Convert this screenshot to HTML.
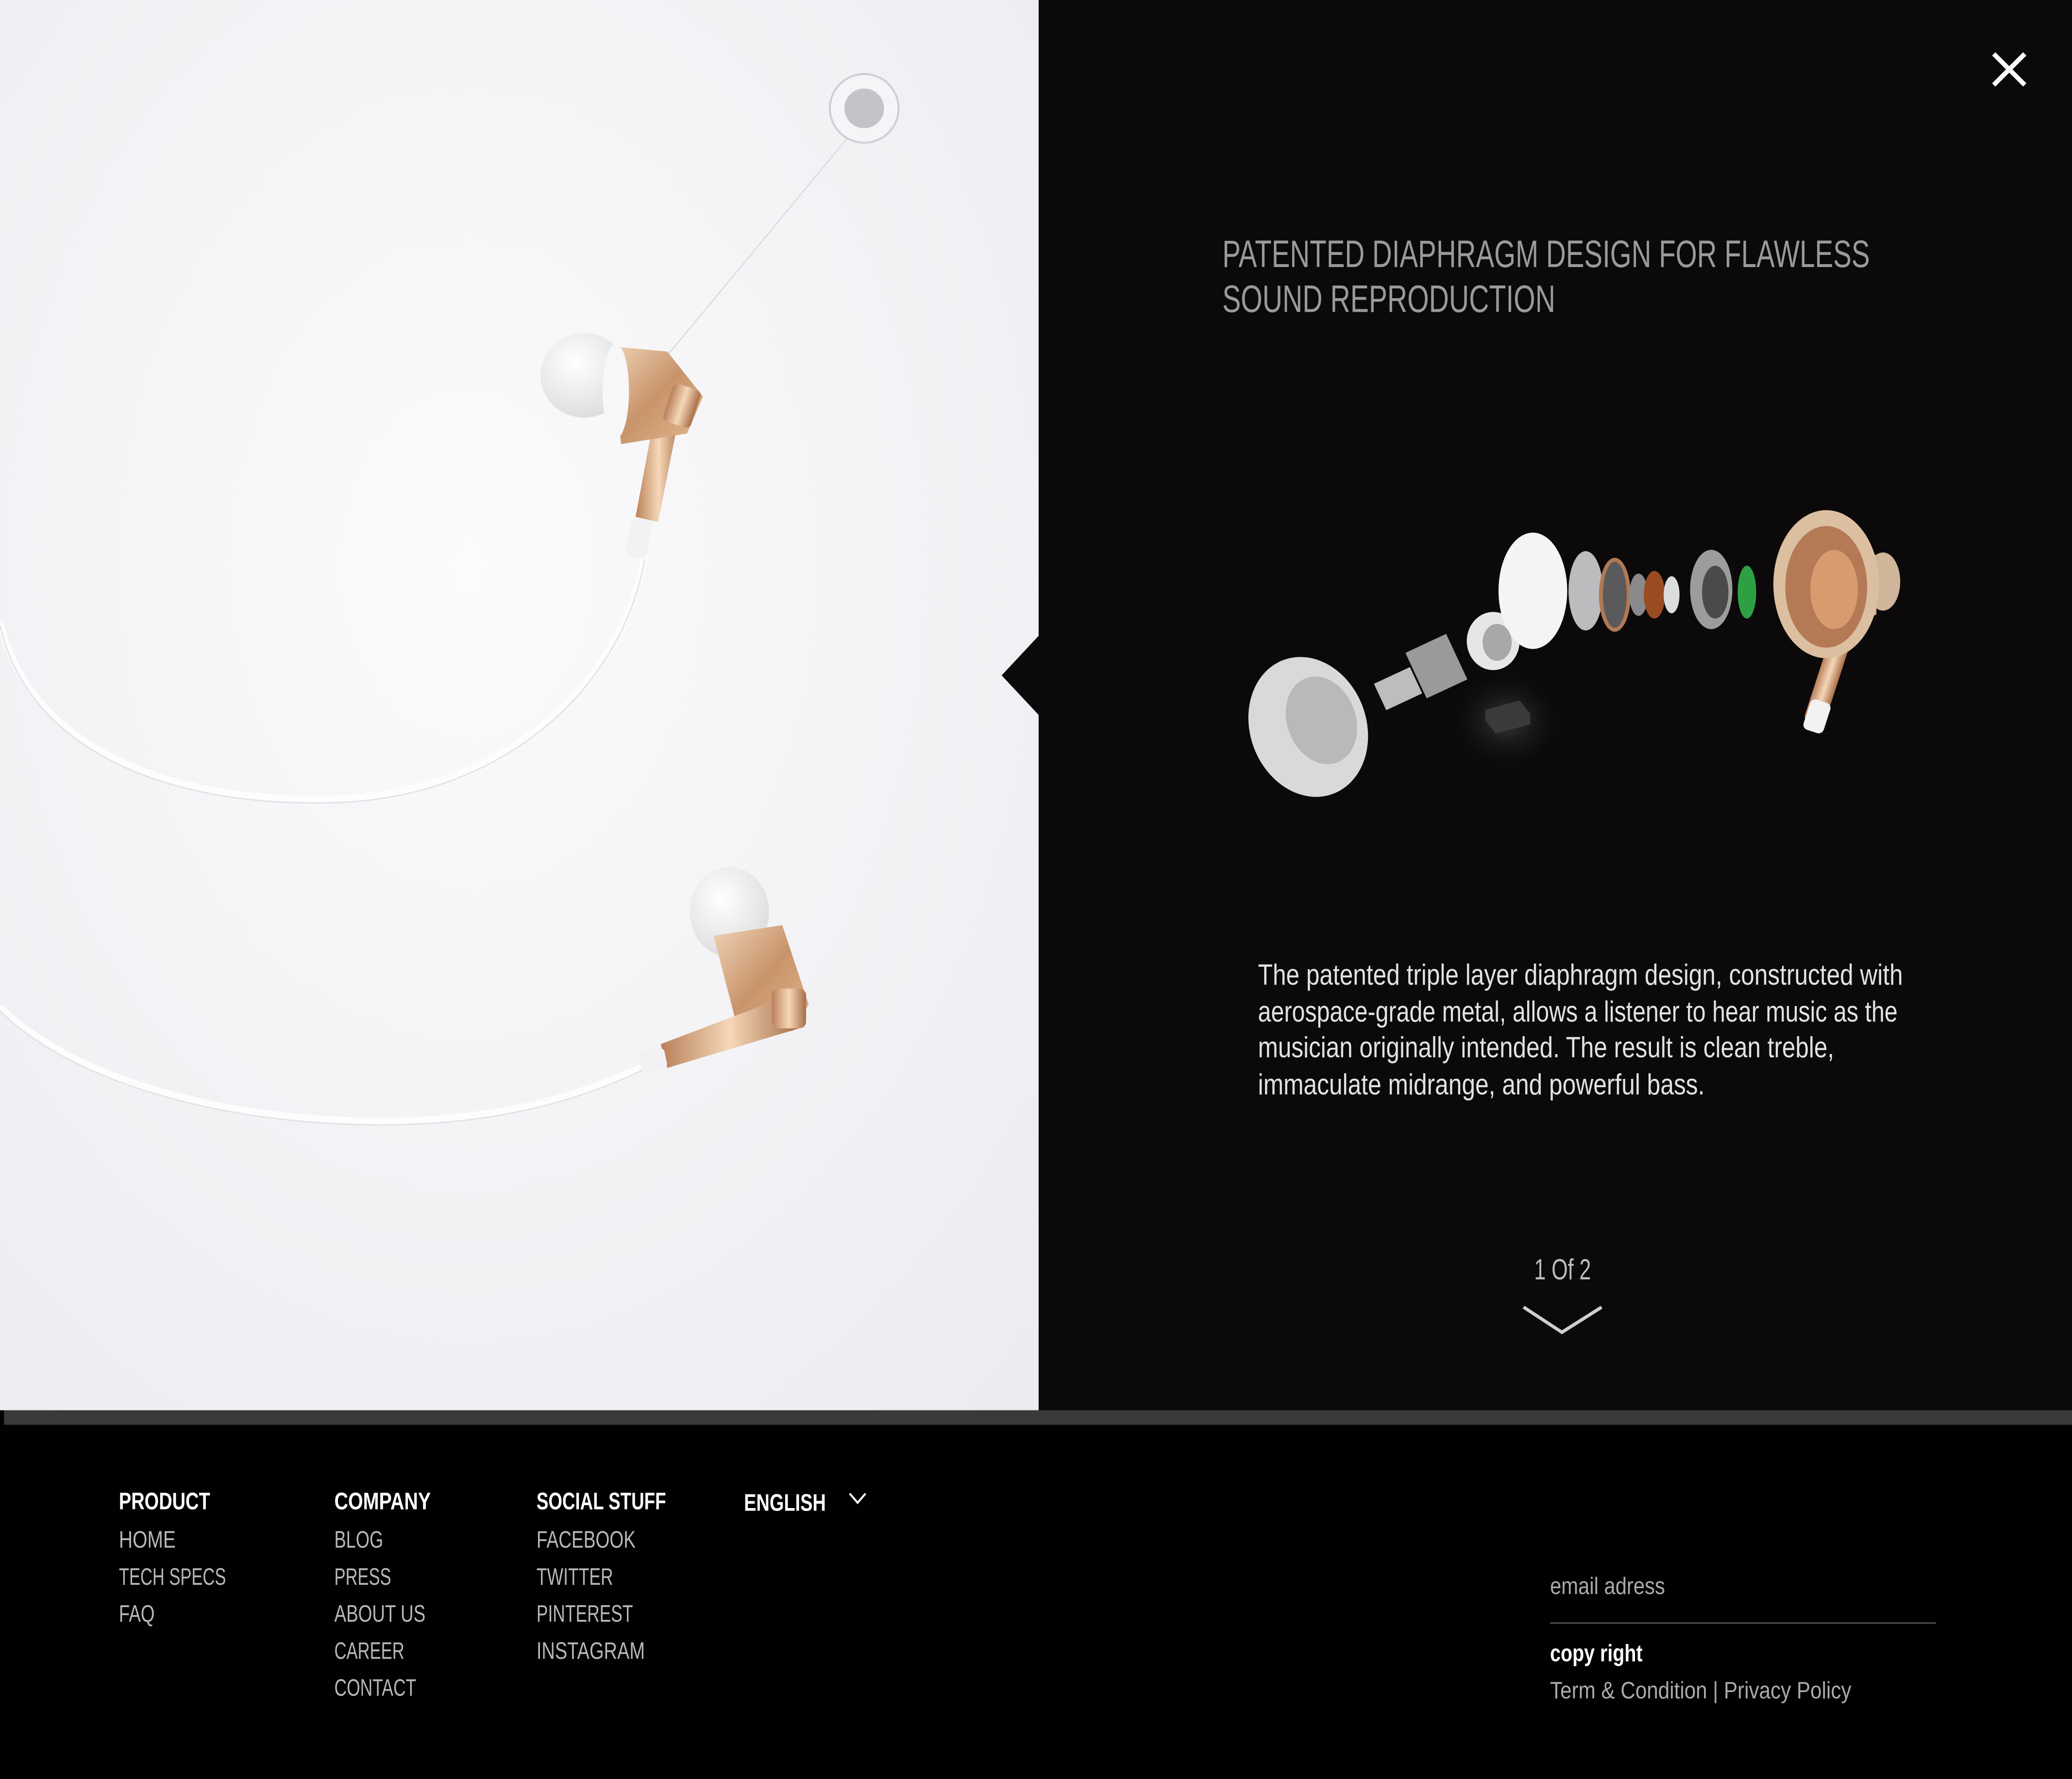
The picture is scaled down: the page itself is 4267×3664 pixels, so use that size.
<!DOCTYPE html>
<html><head><meta charset="utf-8"><style>
html,body{margin:0;padding:0;background:#000;overflow:hidden}
svg{display:block}
text{font-family:"Liberation Sans",sans-serif}
</style></head><body>
<svg width="4267" height="3664" viewBox="0 0 1568 1346" preserveAspectRatio="none" xmlns="http://www.w3.org/2000/svg">
<defs>
<radialGradient id="bgw" cx="0.45" cy="0.4" r="0.8"><stop offset="0" stop-color="#fbfbfc"/><stop offset="1" stop-color="#ecebf0"/></radialGradient>
<linearGradient id="gold" x1="0" y1="0" x2="1" y2="1"><stop offset="0" stop-color="#f0d3b6"/><stop offset="0.5" stop-color="#c8946b"/><stop offset="1" stop-color="#e2b88f"/></linearGradient>
<linearGradient id="gold2" x1="0" y1="0" x2="1" y2="0"><stop offset="0" stop-color="#b9805a"/><stop offset="0.5" stop-color="#f5d7b8"/><stop offset="1" stop-color="#a86e48"/></linearGradient>
<radialGradient id="dome" cx="0.4" cy="0.35" r="0.7"><stop offset="0" stop-color="#ffffff"/><stop offset="1" stop-color="#dcdcdf"/></radialGradient>
<radialGradient id="glow" cx="0.5" cy="0.5" r="0.5"><stop offset="0" stop-color="#3a3a3a"/><stop offset="1" stop-color="#0c090a" stop-opacity="0"/></radialGradient>
</defs>
<rect x="0" y="0" width="1568" height="1346" fill="#000"/>
<rect x="0" y="0" width="786" height="1067" fill="url(#bgw)"/>
<rect x="786" y="0" width="782" height="1067" fill="#0c090a"/>
<polygon points="787,480 758,511 787,542" fill="#0c090a"/>
<rect x="3" y="1067" width="1565" height="11" fill="#3a3839"/>

<!-- left photo approximation -->
<line x1="645" y1="100" x2="500" y2="275" stroke="#d8d8dc" stroke-width="0.8"/>
<circle cx="654" cy="82" r="26" fill="#f5f5f7" stroke="#cfcfd3" stroke-width="1.5"/>
<circle cx="654" cy="82" r="15" fill="#c4c4c8"/>
<path d="M0,470 C20,560 120,610 260,604 C380,598 470,520 488,420" fill="none" stroke="#fdfdfe" stroke-width="5"/>
<path d="M0,470 C20,560 120,610 260,604 C380,598 470,520 488,420" fill="none" stroke="#e2e2e6" stroke-width="1" transform="translate(0,3)"/>
<path d="M0,762 C60,820 180,850 300,848 C400,846 460,820 500,800" fill="none" stroke="#fdfdfe" stroke-width="5"/>
<path d="M0,762 C60,820 180,850 300,848 C400,846 460,820 500,800" fill="none" stroke="#e2e2e6" stroke-width="1" transform="translate(0,3)"/>
<!-- earbud 1 -->
<rect x="476" y="392" width="16" height="30" rx="4" fill="#f2f2f4" transform="rotate(12 484 405)"/>
<polygon points="498,300 516,304 498,395 481,391" fill="url(#gold2)"/>
<polygon points="462,262 505,266 532,300 520,328 470,336" fill="url(#gold)"/>
<rect x="505" y="292" width="22" height="30" rx="4" fill="url(#gold2)" transform="rotate(18 516 307)"/>
<ellipse cx="442" cy="284" rx="33" ry="32" fill="url(#dome)"/>
<ellipse cx="466" cy="296" rx="10" ry="36" fill="#f7f7f8"/>
<!-- earbud 2 -->
<ellipse cx="552" cy="690" rx="30" ry="34" fill="url(#dome)"/>
<polygon points="540,708 592,700 612,760 600,780 560,785" fill="url(#gold)"/>
<polygon points="600,752 605,778 505,808 500,790" fill="url(#gold2)"/>
<rect x="584" y="748" width="26" height="30" rx="5" fill="url(#gold2)"/>
<rect x="484" y="794" width="20" height="16" rx="4" fill="#f2f2f4" transform="rotate(-12 494 802)"/>

<!-- exploded view approximation -->
<ellipse cx="1140" cy="545" rx="45" ry="40" fill="url(#glow)"/>
<polygon points="1124,537 1150,530 1158,540 1158,548 1132,555 1124,545" fill="#3a3a3c"/>
<ellipse cx="990" cy="550" rx="44" ry="54" fill="#d9d9da" transform="rotate(-20 990 550)"/>
<ellipse cx="1000" cy="545" rx="26" ry="34" fill="#b9b9bb" transform="rotate(-20 1000 545)"/>
<rect x="1043" y="510" width="30" height="22" fill="#bdbdbf" transform="rotate(-25 1058 521)"/>
<rect x="1070" y="485" width="34" height="38" fill="#9a9a9c" transform="rotate(-25 1087 504)"/>
<ellipse cx="1130" cy="485" rx="20" ry="22" fill="#e6e6e8"/>
<ellipse cx="1160" cy="447" rx="26" ry="44" fill="#f4f4f5"/>
<ellipse cx="1133" cy="486" rx="11" ry="14" fill="#a8a8aa"/>
<ellipse cx="1200" cy="447" rx="13" ry="30" fill="#bcbcbe"/>
<ellipse cx="1222" cy="450" rx="12" ry="28" fill="#b07a55"/>
<ellipse cx="1222" cy="450" rx="9" ry="25" fill="#5a5a5c"/>
<ellipse cx="1240" cy="450" rx="7" ry="16" fill="#8a8a8c"/>
<ellipse cx="1252" cy="450" rx="8" ry="18" fill="#9a4b22"/>
<ellipse cx="1265" cy="450" rx="6" ry="14" fill="#dcdcdc"/>
<ellipse cx="1295" cy="446" rx="16" ry="30" fill="#9c9c9e"/>
<ellipse cx="1298" cy="448" rx="10" ry="20" fill="#4a4a4c"/>
<ellipse cx="1322" cy="448" rx="7" ry="20" fill="#2ea043"/>
<rect x="1378" y="460" width="16" height="90" rx="5" fill="url(#gold2)" transform="rotate(18 1386 505)"/>
<rect x="1367" y="530" width="16" height="24" rx="4" fill="#f2f2f2" transform="rotate(18 1375 542)"/>
<ellipse cx="1425" cy="440" rx="13" ry="22" fill="#cfb69a"/>
<polygon points="1380,405 1420,420 1420,465 1380,480" fill="#c9ae8f"/>
<ellipse cx="1382" cy="442" rx="40" ry="56" fill="#dcbfa0"/>
<ellipse cx="1382" cy="444" rx="31" ry="46" fill="#b47a56"/>
<ellipse cx="1388" cy="446" rx="18" ry="30" fill="#d89a6f"/>

<!-- close -->
<path d="M1510,42 L1531,63 M1531,42 L1510,63" stroke="#fff" stroke-width="3.5" stroke-linecap="square"/>

<!-- title -->
<text x="925" y="202" font-size="29" fill="#9a9a9a" textLength="490" lengthAdjust="spacingAndGlyphs">PATENTED DIAPHRAGM DESIGN FOR FLAWLESS</text>
<text x="925" y="236" font-size="29" fill="#9a9a9a" textLength="252" lengthAdjust="spacingAndGlyphs">SOUND REPRODUCTION</text>

<!-- body -->
<g font-size="22" fill="#e2e2e2">
<text x="952" y="745" textLength="488" lengthAdjust="spacingAndGlyphs">The patented triple layer diaphragm design, constructed with</text>
<text x="952" y="773" textLength="484" lengthAdjust="spacingAndGlyphs">aerospace-grade metal, allows a listener to hear music as the</text>
<text x="952" y="800" textLength="436" lengthAdjust="spacingAndGlyphs">musician originally intended. The result is clean treble,</text>
<text x="952" y="828" textLength="338" lengthAdjust="spacingAndGlyphs">immaculate midrange, and powerful bass.</text>
</g>
<text x="1161" y="968" font-size="22" fill="#bdbdbd" textLength="43" lengthAdjust="spacingAndGlyphs">1 Of 2</text>
<polyline points="1153,989 1182,1008 1212,989" fill="none" stroke="#cfcfcf" stroke-width="2.5"/>

<!-- footer -->
<g font-size="18" font-weight="bold" fill="#fff">
<text x="90" y="1142" textLength="69" lengthAdjust="spacingAndGlyphs">PRODUCT</text>
<text x="253" y="1142" textLength="73" lengthAdjust="spacingAndGlyphs">COMPANY</text>
<text x="406" y="1142" textLength="98" lengthAdjust="spacingAndGlyphs">SOCIAL STUFF</text>
<text x="563" y="1143" textLength="62" lengthAdjust="spacingAndGlyphs">ENGLISH</text>
</g>
<polyline points="643,1130 649,1137 655,1130" fill="none" stroke="#fff" stroke-width="1.5"/>
<g font-size="18" fill="#b8b8b8">
<text x="90" y="1171" textLength="43" lengthAdjust="spacingAndGlyphs">HOME</text>
<text x="90" y="1199" textLength="81" lengthAdjust="spacingAndGlyphs">TECH SPECS</text>
<text x="90" y="1227" textLength="27" lengthAdjust="spacingAndGlyphs">FAQ</text>
<text x="253" y="1171" textLength="37" lengthAdjust="spacingAndGlyphs">BLOG</text>
<text x="253" y="1199" textLength="43" lengthAdjust="spacingAndGlyphs">PRESS</text>
<text x="253" y="1227" textLength="69" lengthAdjust="spacingAndGlyphs">ABOUT US</text>
<text x="253" y="1255" textLength="53" lengthAdjust="spacingAndGlyphs">CAREER</text>
<text x="253" y="1283" textLength="62" lengthAdjust="spacingAndGlyphs">CONTACT</text>
<text x="406" y="1171" textLength="75" lengthAdjust="spacingAndGlyphs">FACEBOOK</text>
<text x="406" y="1199" textLength="58" lengthAdjust="spacingAndGlyphs">TWITTER</text>
<text x="406" y="1227" textLength="73" lengthAdjust="spacingAndGlyphs">PINTEREST</text>
<text x="406" y="1255" textLength="82" lengthAdjust="spacingAndGlyphs">INSTAGRAM</text>
</g>
<text x="1173" y="1206" font-size="18" fill="#aaa" textLength="87" lengthAdjust="spacingAndGlyphs">email adress</text>
<line x1="1173" y1="1228" x2="1465" y2="1228" stroke="#555" stroke-width="1"/>
<text x="1173" y="1257" font-size="18" font-weight="bold" fill="#fff" textLength="70" lengthAdjust="spacingAndGlyphs">copy right</text>
<text x="1173" y="1285" font-size="18" fill="#aaa" textLength="228" lengthAdjust="spacingAndGlyphs">Term &amp; Condition |  Privacy Policy</text>
</svg>
</body></html>
